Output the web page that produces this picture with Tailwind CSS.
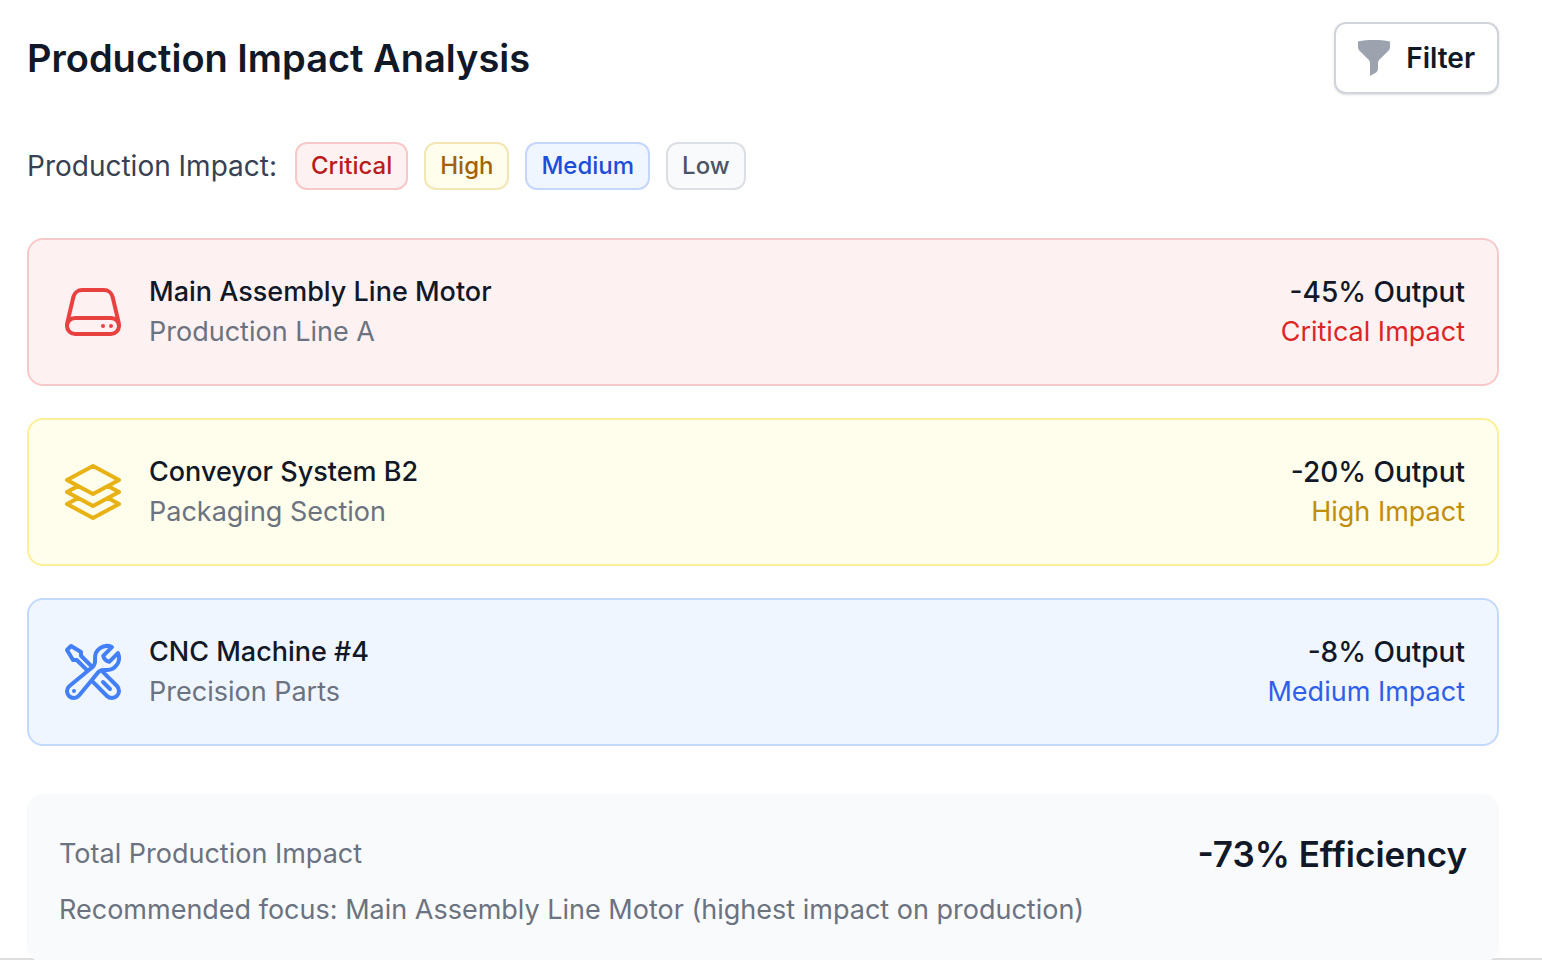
<!DOCTYPE html>
<html lang="en">
<head>
<meta charset="utf-8">
<title>Production Impact Analysis</title>
<script src="https://cdn.jsdelivr.net/npm/@tailwindcss/browser@4"></script>
</head>
<body class="bg-white font-['Inter',sans-serif] text-[#111827] overflow-hidden">
<main class="pt-[22px]">
  <div class="pl-[27px] pr-[43px]">
  <header class="flex items-center justify-between">
    <h1 class="text-[38px] leading-[56px] font-semibold">Production Impact Analysis</h1>
    <button class="flex items-center gap-3 h-[72px] pl-[18px] pr-[22px] rounded-xl border-2 border-[#d1d5db] bg-white shadow-sm text-[28px] leading-10 font-semibold">
      <svg class="w-10 h-10 text-[#9ca3af]" viewBox="0 0 20 20" fill="currentColor" aria-hidden="true"><path d="M2 1.7C4.6 1.2 7.3 1 10 1s5.400.2 8 .7v2.929a2.250 2.250 0 0 1-.659 1.590l-4.682 4.683a2.250 2.250 0 0 0-.659 1.590v2.927a2.250 2.250 0 0 1-.920 1.818L8 19v-6.507a2.250 2.250 0 0 0-.659-1.591L2.659 6.220A2.250 2.250 0 0 1 2 4.629Z"/></svg>
      Filter
    </button>
  </header>

  <section class="mt-12 flex items-center gap-[18px]">
    <span class="text-[28px] leading-10 text-[#374151]">Production Impact:</span>
    <ul class="flex gap-4 text-2xl leading-8 font-medium">
      <li class="rounded-xl border-2 px-[14px] py-[6px] border-[#f6c8c8] bg-[#fdf2f1] text-[#b91c1c]">Critical</li>
      <li class="rounded-xl border-2 px-[14px] py-[6px] border-[#f3e6b5] bg-[#fffdeb] text-[#a16207]">High</li>
      <li class="rounded-xl border-2 px-[14px] py-[6px] border-[#c6d6fa] bg-[#eff6ff] text-[#1d4ed8]">Medium</li>
      <li class="rounded-xl border-2 px-[14px] py-[6px] border-[#dcdfe4] bg-[#f9fafb] text-[#4b5563]">Low</li>
    </ul>
  </section>

  <section class="mt-12 flex flex-col gap-8 text-[27px] leading-10">
    <article class="flex items-center gap-6 rounded-2xl border-2 px-8 py-8 border-[#f6c9c9] bg-[#fdf2f1]">
      <svg class="w-16 h-16 text-[#e9413f]" viewBox="0 0 24 24" fill="none" stroke="currentColor" stroke-width="1.5" stroke-linecap="round" stroke-linejoin="round" aria-hidden="true"><path d="M21.75 17.25v-.228a4.5 4.5 0 0 0-.12-1.03l-2.268-9.64a3.375 3.375 0 0 0-3.285-2.602H7.923a3.375 3.375 0 0 0-3.285 2.602l-2.268 9.64a4.5 4.5 0 0 0-.12 1.03v.228m19.5 0a3 3 0 0 1-3 3H5.25a3 3 0 0 1-3-3m19.5 0a3 3 0 0 0-3-3H5.25a3 3 0 0 0-3 3m16.5 0h.008v.008h-.008v-.008Zm-3 0h.008v.008h-.008v-.008Z"/></svg>
      <div class="grow"><h2 class="font-medium">Main Assembly Line Motor</h2><p class="text-[#6b7280]">Production Line A</p></div>
      <div class="text-right"><p class="text-[28px] leading-10 font-medium">-45% Output</p><p class="text-[#dc2626]">Critical Impact</p></div>
    </article>
    <article class="flex items-center gap-6 rounded-2xl border-2 px-8 py-8 border-[#fcef97] bg-[#fffdeb]">
      <svg class="w-16 h-16 text-[#e8b215]" viewBox="0 0 24 24" fill="none" stroke="currentColor" stroke-width="1.5" stroke-linecap="round" stroke-linejoin="round" aria-hidden="true"><path d="M6.429 9.75 2.25 12l4.179 2.25m0-4.5 5.571 3 5.571-3m-11.142 0L2.25 7.5 12 2.25l9.75 5.25-4.179 2.25m0 0L21.75 12l-4.179 2.25m0 0 4.179 2.25L12 21.75 2.25 16.5l4.179-2.25m11.142 0-5.571 3-5.571-3"/></svg>
      <div class="grow"><h2 class="font-medium">Conveyor System B2</h2><p class="text-[#6b7280]">Packaging Section</p></div>
      <div class="text-right"><p class="text-[28px] leading-10 font-medium">-20% Output</p><p class="text-[#c28c0c]">High Impact</p></div>
    </article>
    <article class="flex items-center gap-6 rounded-2xl border-2 px-8 py-8 border-[#c3d9fc] bg-[#eff6ff]">
      <svg class="w-16 h-16 text-[#437ff7]" viewBox="0 0 24 24" fill="none" stroke="currentColor" stroke-width="1.5" stroke-linecap="round" stroke-linejoin="round" aria-hidden="true"><path d="M11.42 15.17 17.25 21A2.652 2.652 0 0 0 21 17.25l-5.877-5.877M11.42 15.17l2.496-3.03c.317-.384.74-.626 1.208-.766M11.42 15.17l-4.655 5.653a2.548 2.548 0 1 1-3.586-3.586l6.837-5.63m5.108-.233c.55-.164 1.163-.188 1.743-.14a4.5 4.5 0 0 0 4.486-6.336l-3.276 3.277a3.004 3.004 0 0 1-2.25-2.25l3.276-3.276a4.5 4.5 0 0 0-6.336 4.486c.091 1.076-.071 2.264-.904 2.95l-.102.085m-1.745 1.437L5.909 7.5H4.5L2.25 3.75l1.5-1.5L7.5 4.5v1.409l4.26 4.26m-1.745 1.437 1.745-1.437m6.615 8.206L15.75 15.75M4.867 19.125h.008v.008h-.008v-.008Z"/></svg>
      <div class="grow"><h2 class="font-medium">CNC Machine #4</h2><p class="text-[#6b7280]">Precision Parts</p></div>
      <div class="text-right"><p class="text-[28px] leading-10 font-medium">-8% Output</p><p class="text-[#2f5fe8]">Medium Impact</p></div>
    </article>
  </section>

  <section class="relative z-10 mt-12 rounded-2xl bg-[#f9fafb] p-8 text-[27px] leading-10 text-[#6b7280]">
    <div class="flex items-center justify-between">
      <h2>Total Production Impact</h2>
      <p class="text-[35px] leading-14 font-semibold text-[#111827]">-73% Efficiency</p>
    </div>
    <p class="mt-2">Recommended focus: Main Assembly Line Motor (highest impact on production)</p>
  </section>
  </div>
  <hr class="-mt-1 border-t-2 border-[#dedede]">
</main>
</body>
</html>
